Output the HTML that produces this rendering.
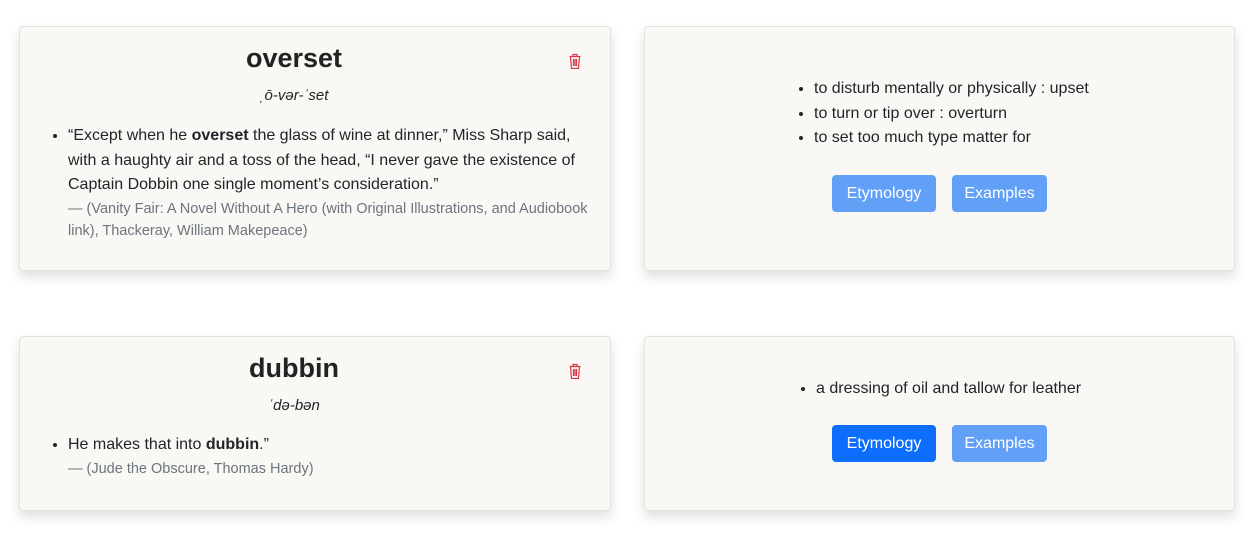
<!DOCTYPE html>
<html><head><style>
body{margin:0;background:#fff;font-family:"Liberation Sans",sans-serif;color:#212529;width:1255px;height:543px;overflow:hidden;position:relative}
.card{position:absolute;background:#f9f8f5;border:1px solid #e3e2df;border-radius:4px;box-shadow:0 6px 12px rgba(0,0,0,.13);box-sizing:border-box}
h2{margin:0;position:absolute;left:0;right:42px;text-align:center;font-size:27px;font-weight:bold;color:#222}
.pr{position:absolute;left:0;right:42px;text-align:center;font-style:italic;font-size:15px}
.trash{position:absolute;right:28px;width:14px;height:16px}
ul{margin:0;padding-left:48px;font-size:16px;line-height:24.5px}
.src{color:#6c757d;font-size:14.5px;line-height:22px}
.btn{position:absolute;height:37px;line-height:37px;border-radius:4px;color:#fff;font-size:16px;text-align:center;background:#62a0f8}
.btn.a{background:#0d6efd}
</style></head><body>
<svg width="0" height="0" style="position:absolute"><defs><g id="t"><path d="M1.5 3.5h11M5 3.5V1.5h4v2M2.5 3.5l1 12h7l1-12M5.5 6v7M7 6v7M8.5 6v7" fill="none" stroke="#dc3545" stroke-width="1.2"/></g></defs></svg>

<div class="card" style="left:19px;top:26px;width:592px;height:245px">
<h2 style="top:16px">overset</h2>
<svg class="trash" style="top:26px"><use href="#t"/></svg>
<div class="pr" style="top:60px">ˌō-vər-ˈset</div>
<ul style="position:absolute;top:97px;left:0;right:22px">
<li>“Except when he <b>overset</b> the glass of wine at dinner,” Miss Sharp said, with a haughty air and a toss of the head, “I never gave the existence of Captain Dobbin one single moment’s consideration.”<div class="src">— (Vanity Fair: A Novel Without A Hero (with Original Illustrations, and Audiobook link), Thackeray, William Makepeace)</div></li></ul>
</div>

<div class="card" style="left:644px;top:26px;width:591px;height:245px">
<ul style="position:absolute;top:50px;left:123px;padding-left:46px">
<li>to disturb mentally or physically : upset</li><li>to turn or tip over : overturn</li><li>to set too much type matter for</li></ul>
<div class="btn" style="left:187px;top:148px;width:104px">Etymology</div>
<div class="btn" style="left:307px;top:148px;width:95px">Examples</div>
</div>

<div class="card" style="left:19px;top:336px;width:592px;height:175px">
<h2 style="top:16px">dubbin</h2>
<svg class="trash" style="top:26px"><use href="#t"/></svg>
<div class="pr" style="top:60px">ˈdə-bən</div>
<ul style="position:absolute;top:96px;left:0;right:22px">
<li>He makes that into <b>dubbin</b>.”<div class="src">— (Jude the Obscure, Thomas Hardy)</div></li></ul>
</div>

<div class="card" style="left:644px;top:336px;width:591px;height:175px">
<ul style="position:absolute;top:40px;left:125px;padding-left:46px">
<li>a dressing of oil and tallow for leather</li></ul>
<div class="btn a" style="left:187px;top:88px;width:104px">Etymology</div>
<div class="btn" style="left:307px;top:88px;width:95px">Examples</div>
</div>
</body></html>
